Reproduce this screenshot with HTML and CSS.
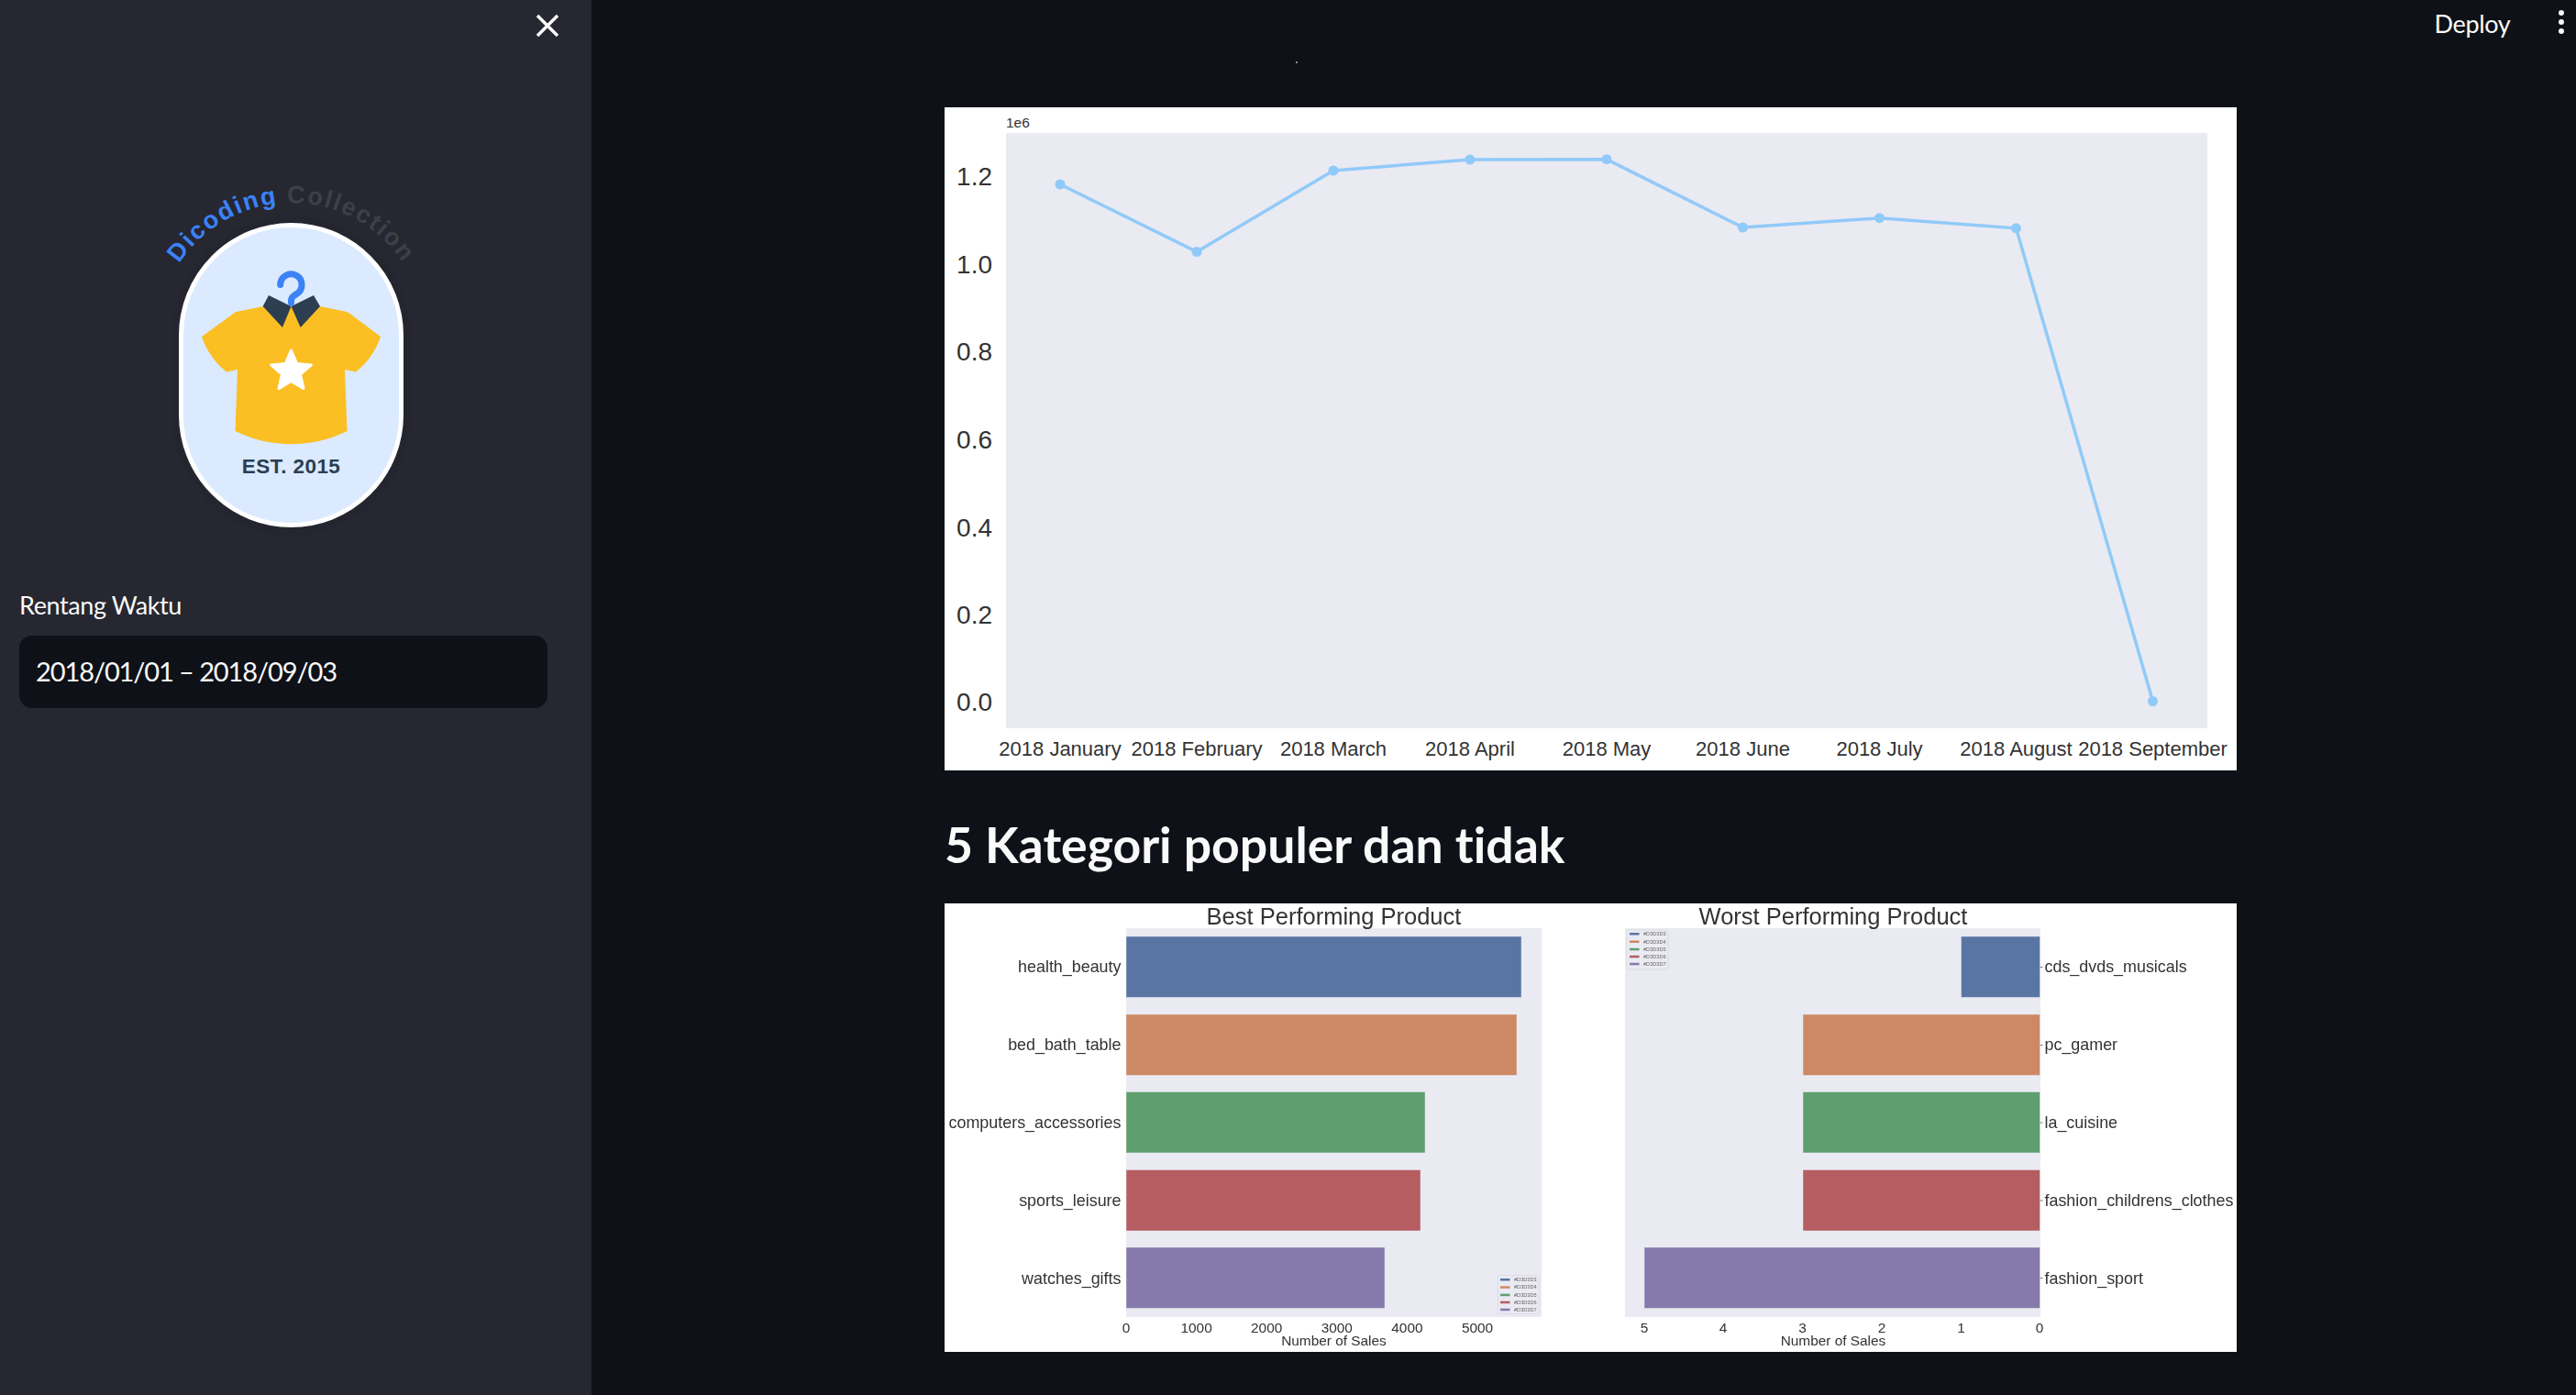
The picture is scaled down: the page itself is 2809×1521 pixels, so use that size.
FILE: index.html
```html
<!DOCTYPE html>
<html lang="en">
<head>
  <meta charset="UTF-8">
  <title>Dicoding Collection Dashboard</title>
  <link rel="stylesheet" href="styles.css">
</head>
<body>

<div class="app">
  <aside class="sidebar">
    <div class="sidebar-top">
      <button class="close-btn" aria-label="Close sidebar">
        <svg width="26" height="26" viewBox="0 0 26 26"><path d="M2 2 L24 24 M24 2 L2 24" stroke="#fafafa" stroke-width="3.5" fill="none"/></svg>
      </button>
    </div>

    <!-- Logo -->
    <svg class="logo" width="320" height="400" viewBox="160 200 320 400">
      <defs>
        <path id="logoArc" d="M171.5 367.2 A146 146 0 0 1 463.5 367.2"/>
      </defs>
      <text class="logo-arc">
        <textPath href="#logoArc" startOffset="50%" text-anchor="middle"><tspan fill="#3b82f6">Dicoding</tspan> <tspan fill="#3d3f4a">Collection</tspan></textPath>
      </text>
      <rect x="187" y="236" width="261" height="348" rx="130" fill="#000" opacity="0.03"/>
      <rect x="197.5" y="245.5" width="240" height="327" rx="120" fill="#dbeafe" stroke="#fff" stroke-width="5"/>
      <path d="M220 367 L253 343 Q256 340 260 339.5 L287 334 L349 334 L376 339.5 Q380 340 383 343 L415 367 C410 383 399 397 388 405.5 L376 403 L378.5 470 C340 489 295 489 256.5 470 L259 403 L247 405.5 C236 397 225 383 220 367 Z" fill="#fbbf24"/>
      <path d="M293 322 L317.5 334 L308 357 L286.7 334 Z" fill="#2c3e50"/>
      <path d="M342 322 L349 334 L327.7 357 L317.5 334 Z" fill="#2c3e50"/>
      <path d="M305.7 310.5 A11.7 11.7 0 1 1 323.5 320.5 Q317.5 323.5 317.5 328 L317.5 330" fill="none" stroke="#3b82f6" stroke-width="7" stroke-linecap="round"/>
      <path d="M317.5 382 L323.7 396.5 L339.4 397.9 L327.5 408.2 L331 423.6 L317.5 415.5 L304 423.6 L307.5 408.2 L295.6 397.9 L311.3 396.5 Z" fill="#fff" stroke="#fff" stroke-width="3" stroke-linejoin="round"/>
      <text class="logo-est" x="317.5" y="516" text-anchor="middle">EST. 2015</text>
    </svg>

    <label class="field-label">Rentang Waktu</label>
    <div class="date-input">2018/01/01 – 2018/09/03</div>
  </aside>

  <main class="main">
    <header class="topbar">
      <span class="deploy">Deploy</span>
      <span class="kebab"><i></i><i></i><i></i></span>
    </header>

    <div class="tiny-dot"></div>

    <!-- Monthly orders line chart, coordinates are pixels inside the 1409x723 figure -->
    <svg class="figure figure-line" viewBox="0 0 1409 723">
      <rect x="67" y="28" width="1310" height="649" fill="#eaeaf2"/>
      <text class="tick-small" x="67" y="22">1e6</text>
      <g class="tick-y" text-anchor="end">
        <text x="52" y="85">1.2</text>
        <text x="52" y="181">1.0</text>
        <text x="52" y="276">0.8</text>
        <text x="52" y="372">0.6</text>
        <text x="52" y="468">0.4</text>
        <text x="52" y="563">0.2</text>
        <text x="52" y="658">0.0</text>
      </g>
      <polyline points="126,84 275,157.5 424,69 573,57 722,56.7 870.5,131 1019.5,120.7 1168.5,131.8 1317.5,647.5" fill="none" stroke="#90caf9" stroke-width="3.5"/>
      <g fill="#90caf9">
        <circle cx="126" cy="84" r="5.5"/>
        <circle cx="275" cy="157.5" r="5.5"/>
        <circle cx="424" cy="69" r="5.5"/>
        <circle cx="573" cy="57" r="5.5"/>
        <circle cx="722" cy="56.7" r="5.5"/>
        <circle cx="870.5" cy="131" r="5.5"/>
        <circle cx="1019.5" cy="120.7" r="5.5"/>
        <circle cx="1168.5" cy="131.8" r="5.5"/>
        <circle cx="1317.5" cy="647.5" r="5.5"/>
      </g>
      <g class="tick-x" text-anchor="middle">
        <text x="126" y="707">2018 January</text>
        <text x="275" y="707">2018 February</text>
        <text x="424" y="707">2018 March</text>
        <text x="573" y="707">2018 April</text>
        <text x="722" y="707">2018 May</text>
        <text x="870.5" y="707">2018 June</text>
        <text x="1019.5" y="707">2018 July</text>
        <text x="1168.5" y="707">2018 August</text>
        <text x="1317.5" y="707">2018 September</text>
      </g>
    </svg>

    <h2 class="section-title">5 Kategori populer dan tidak</h2>

    <!-- Best and worst categories -->
    <svg class="figure figure-bars" viewBox="-1 0 1409 489">
      <!-- left axes -->
      <rect x="197" y="27" width="453" height="424" fill="#eaeaf2"/>
      <text class="bar-title" x="423.5" y="23" text-anchor="middle">Best Performing Product</text>
      <g stroke="#eaeaf2" stroke-opacity="0.5" stroke-width="1">
        <rect x="197" y="36" width="431" height="66.5" fill="#5975a4"/>
        <rect x="197" y="121" width="426" height="66.5" fill="#cc8963"/>
        <rect x="197" y="205.5" width="326" height="66.5" fill="#5f9e6e"/>
        <rect x="197" y="290.5" width="321" height="66.5" fill="#b55d60"/>
        <rect x="197" y="375" width="282" height="66.5" fill="#857aab"/>
      </g>
      <g class="bar-label" text-anchor="end">
        <text x="191.5" y="75">health_beauty</text>
        <text x="191.5" y="160">bed_bath_table</text>
        <text x="191.5" y="245">computers_accessories</text>
        <text x="191.5" y="330">sports_leisure</text>
        <text x="191.5" y="415">watches_gifts</text>
      </g>
      <g class="bar-tick" text-anchor="middle">
        <text x="197" y="468">0</text>
        <text x="273.6" y="468">1000</text>
        <text x="350.2" y="468">2000</text>
        <text x="426.8" y="468">3000</text>
        <text x="503.4" y="468">4000</text>
        <text x="580" y="468">5000</text>
      </g>
      <text class="bar-tick" x="423.5" y="482" text-anchor="middle">Number of Sales</text>
      <g>
        <rect x="602.5" y="405.5" width="44.5" height="42" rx="1.5" fill="#eaeaf2" stroke="#dcdce6"/>
        <rect x="605" y="409" width="10.5" height="2.5" fill="#5975a4"/>
        <rect x="605" y="417.3" width="10.5" height="2.5" fill="#cc8963"/>
        <rect x="605" y="425.7" width="10.5" height="2.5" fill="#5f9e6e"/>
        <rect x="605" y="433.7" width="10.5" height="2.5" fill="#b55d60"/>
        <rect x="605" y="441.7" width="10.5" height="2.5" fill="#857aab"/>
        <g class="legend-text">
          <text x="620" y="412">#D3D3D3</text>
          <text x="620" y="420.3">#D3D3D4</text>
          <text x="620" y="428.7">#D3D3D5</text>
          <text x="620" y="436.7">#D3D3D6</text>
          <text x="620" y="444.7">#D3D3D7</text>
        </g>
      </g>

      <!-- right axes -->
      <rect x="741" y="27" width="453" height="424" fill="#eaeaf2"/>
      <text class="bar-title" x="968" y="23" text-anchor="middle">Worst Performing Product</text>
      <g stroke="#eaeaf2" stroke-opacity="0.5" stroke-width="1">
        <rect x="1107.5" y="36" width="86" height="66.5" fill="#5975a4"/>
        <rect x="935" y="121" width="258.5" height="66.5" fill="#cc8963"/>
        <rect x="935" y="205.5" width="258.5" height="66.5" fill="#5f9e6e"/>
        <rect x="935" y="290.5" width="258.5" height="66.5" fill="#b55d60"/>
        <rect x="762" y="375" width="431.5" height="66.5" fill="#857aab"/>
      </g>
      <g stroke="#777" stroke-width="1">
        <path d="M1193.5 69.5 h3 M1193.5 154.5 h3 M1193.5 239 h3 M1193.5 324 h3 M1193.5 408.5 h3"/>
      </g>
      <g class="bar-label">
        <text x="1198.5" y="75">cds_dvds_musicals</text>
        <text x="1198.5" y="160">pc_gamer</text>
        <text x="1198.5" y="245">la_cuisine</text>
        <text x="1198.5" y="330">fashion_childrens_clothes</text>
        <text x="1198.5" y="415">fashion_sport</text>
      </g>
      <g class="bar-tick" text-anchor="middle">
        <text x="762" y="468">5</text>
        <text x="848" y="468">4</text>
        <text x="934.5" y="468">3</text>
        <text x="1021" y="468">2</text>
        <text x="1107.5" y="468">1</text>
        <text x="1193" y="468">0</text>
      </g>
      <text class="bar-tick" x="968" y="482" text-anchor="middle">Number of Sales</text>
      <g>
        <rect x="743" y="29" width="45" height="43" rx="1.5" fill="#eaeaf2" stroke="#dcdce6"/>
        <rect x="746" y="32" width="10.5" height="2.5" fill="#5975a4"/>
        <rect x="746" y="40.5" width="10.5" height="2.5" fill="#cc8963"/>
        <rect x="746" y="48.8" width="10.5" height="2.5" fill="#5f9e6e"/>
        <rect x="746" y="56.8" width="10.5" height="2.5" fill="#b55d60"/>
        <rect x="746" y="64.8" width="10.5" height="2.5" fill="#857aab"/>
        <g class="legend-text">
          <text x="761" y="35">#D3D3D3</text>
          <text x="761" y="43.5">#D3D3D4</text>
          <text x="761" y="51.8">#D3D3D5</text>
          <text x="761" y="59.8">#D3D3D6</text>
          <text x="761" y="67.8">#D3D3D7</text>
        </g>
      </g>
    </svg>
  </main>
</div>

</body>
</html>
```
FILE: styles.css
```css
* {
  box-sizing: border-box;
}

body {
  margin: 0;
  background: #0e1117;
  color: #fafafa;
  font-family: "Lato", "Noto Sans", sans-serif;
  font-variant-ligatures: none;
}

.app {
  display: flex;
  height: 1521px;
  overflow: hidden;
}

/* Sidebar */
.sidebar {
  width: 645px;
  flex-shrink: 0;
  background: #262730;
  padding: 0 48px 0 21px;
  display: flex;
  flex-direction: column;
}

.sidebar-top {
  display: flex;
  justify-content: flex-end;
  padding-top: 15px;
  height: 200px;
}

.close-btn {
  background: none;
  border: 0;
  padding: 0;
  width: 26px;
  height: 26px;
  margin-right: -13px;
}

.logo {
  display: block;
  margin: 0 0 0 139px;
}

.field-label {
  font-size: 27px;
  letter-spacing: -0.4px;
  line-height: 36px;
  margin-top: 42px;
}

.date-input {
  margin-top: 15px;
  height: 79px;
  background: #0e1117;
  border-radius: 14px;
  padding: 0 18px 2px;
  display: flex;
  align-items: center;
  font-size: 29px;
  letter-spacing: -1.1px;
}

.logo-arc {
  font-family: "Liberation Sans", sans-serif;
  font-weight: bold;
  font-size: 27px;
  letter-spacing: 1.9px;
}

.logo-est {
  font-family: "Liberation Sans", sans-serif;
  font-weight: bold;
  font-size: 22.5px;
  letter-spacing: 0.4px;
  fill: #2c3e50;
}

/* Main column */
.main {
  flex: 1;
  position: relative;
  padding: 117px 370px 0 385px;
}

.topbar {
  position: absolute;
  top: 0;
  right: 0;
  display: flex;
  align-items: center;
  height: 48px;
  padding-right: 13px;
}

.deploy {
  font-size: 27px;
  letter-spacing: -0.3px;
  margin: 2px 52px 0 0;
}

.kebab {
  display: flex;
  flex-direction: column;
  gap: 3.5px;
}

.kebab i {
  display: block;
  width: 6.5px;
  height: 6.5px;
  border-radius: 50%;
  background: #fafafa;
}

.tiny-dot {
  position: absolute;
  left: 768px;
  top: 67px;
  width: 2px;
  height: 2px;
  background: #8a8d93;
}

.figure {
  display: block;
  width: 1409px;
  background: #fff;
  font-family: "Liberation Sans", sans-serif;
  fill: #333;
}

.figure-line {
  height: 723px;
}

.figure-bars {
  height: 489px;
  filter: blur(0.5px);
}

.section-title {
  margin: 0;
  height: 145px;
  padding-top: 14px;
  display: flex;
  align-items: center;
  font-size: 53.5px;
  font-weight: 700;
}

/* Chart text */
.tick-small {
  font-size: 15.5px;
}

.tick-y {
  font-size: 28px;
}

.tick-x {
  font-size: 22px;
}

.bar-title {
  font-size: 25.5px;
}

.bar-label {
  font-size: 17.9px;
}

.bar-tick {
  font-size: 15.4px;
}

.legend-text {
  font-size: 5.6px;
  fill: #666;
}
```
